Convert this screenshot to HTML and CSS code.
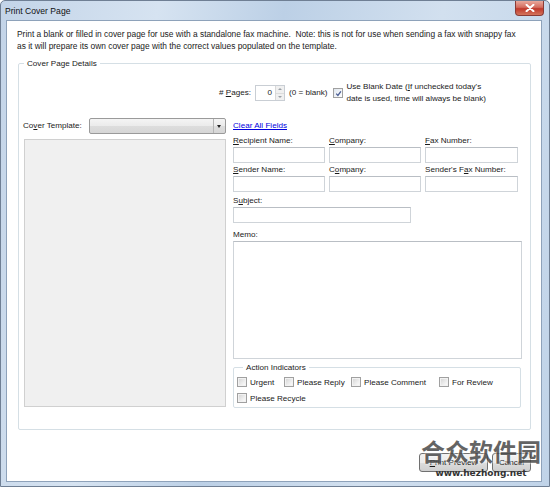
FILE: index.html
```
<!DOCTYPE html>
<html>
<head>
<meta charset="utf-8">
<link rel="stylesheet" href="styles.css">
</head>
<body>
<div class="window">
  <div class="titlebar">
    <span class="title">Print Cover Page</span>
    <span class="close"><svg width="10" height="8" viewBox="0 0 10 8"><path d="M1.5 0.8 L8.5 7.2 M8.5 0.8 L1.5 7.2" stroke="#fff" stroke-width="2" stroke-linecap="round"/></svg></span>
  </div>
  <div class="client">
    <p class="intro">Print a blank or filled in cover page for use with a standalone fax machine.&nbsp; Note: this is not for use when sending a fax with snappy fax<br>as it will prepare its own cover page with the correct values populated on the template.</p>
    <fieldset class="details">
      <legend>Cover Page Details</legend>
      <div class="pages-row">
        <span class="lbl"># <u>P</u>ages:</span>
        <span class="spinner"><span class="spin-val">0</span><span class="spin-btns"><span class="spin-up"></span><span class="spin-down"></span></span></span>
        <span class="lbl blank-lbl">(0 = blank)</span>
        <span class="cb checked"><svg width="7" height="7" viewBox="0 0 7 7"><path d="M1.2 3.6 L2.9 5.4 L5.9 1.3" fill="none" stroke="#4a5d94" stroke-width="1.3"/></svg></span>
        <span class="date-text">Use Blank Date (<u>I</u>f unchecked today's<br>date is used, time will always be blank)</span>
      </div>
      <div class="main">
        <div class="left">
          <div class="template-row">
            <span class="lbl">Co<u>v</u>er Template:</span>
            <span class="combo"><span class="combo-arrow"></span></span>
          </div>
          <div class="preview"></div>
        </div>
        <div class="right">
          <a class="clear" href="#">Clear All Fields</a>
          <div class="fields">
            <span class="flabel"><u>R</u>ecipient Name:</span>
            <span class="flabel"><u>C</u>ompany:</span>
            <span class="flabel"><u>F</u>ax Number:</span>
            <span class="input"></span>
            <span class="input"></span>
            <span class="input"></span>
            <span class="flabel"><u>S</u>ender Name:</span>
            <span class="flabel">C<u>o</u>mpany:</span>
            <span class="flabel">Sender's F<u>a</u>x Number:</span>
            <span class="input"></span>
            <span class="input"></span>
            <span class="input"></span>
          </div>
          <span class="flabel subj-label">S<u>u</u>bject:</span>
          <span class="input subject"></span>
          <span class="flabel memo-label">Memo:</span>
          <span class="memo"></span>
          <fieldset class="actions">
            <legend>Action Indicators</legend>
            <div class="act-row">
              <span class="act w-urgent"><span class="cb"></span>Urgent</span>
              <span class="act w-reply"><span class="cb"></span>Please Reply</span>
              <span class="act w-comment"><span class="cb"></span>Please Comment</span>
              <span class="act"><span class="cb"></span>For Review</span>
            </div>
            <div class="act-row">
              <span class="act"><span class="cb"></span>Please Recycle</span>
            </div>
          </fieldset>
        </div>
      </div>
    </fieldset>
    <div class="buttons">
      <span class="btn btn-preview"><u>P</u>rint Preview</span>
      <span class="btn btn-cancel">Cancel</span>
    </div>
    <div class="watermark">
      <span class="wm-cn">合众软件园</span>
      <span class="wm-url">www.hezhong.net</span>
    </div>
  </div>
</div>
</body>
</html>
```
FILE: styles.css
```
html, body {
  margin: 0;
  padding: 0;
  background: #fff;
}
body {
  font-family: "Liberation Sans", Arial, sans-serif;
  font-size: 8.1px;
  color: #1a1a1a;
}
.window {
  width: 550px;
  height: 487px;
  box-sizing: border-box;
  border: 1px solid #6f7f94;
  border-radius: 5px 5px 0 0;
  background: linear-gradient(100deg, #c3d4e8 0%, #d6e3f1 25%, #bcd0e6 45%, #d2e0ef 70%, #c0d3e8 100%);
  display: flex;
  flex-direction: column;
  overflow: hidden;
}
.titlebar {
  height: 19px;
  flex: none;
  display: flex;
  align-items: flex-start;
  padding-left: 4px;
}
.title {
  font-size: 8.6px;
  line-height: 20px;
  color: #111;
}
.close {
  margin-left: auto;
  margin-right: 5px;
  width: 29px;
  height: 15px;
  box-sizing: border-box;
  border: 1px solid #8a3b35;
  border-top: none;
  border-radius: 0 0 4px 4px;
  background: linear-gradient(#e9a99c 0%, #d46d5f 45%, #c0392b 55%, #d3745c 100%);
  display: flex;
  align-items: center;
  justify-content: center;
}
.client {
  flex: 1;
  margin: 0 7px 4px 5px;
  background: #fff;
  border: 1px solid #8ea2ba;
  position: relative;
}
.intro {
  margin: 8px 0 0 10px;
  line-height: 11.5px;
  font-size: 8.4px;
}
.details {
  margin: 6px 0 0 11px;
  padding: 0 0 21px 0;
  width: 513px;
  box-sizing: border-box;
  border: 1px solid #d5dfe5;
  border-radius: 2px;
}
.details legend {
  margin-left: 5px;
  padding: 0 3px;
  line-height: 11px;
}
.lbl {
  line-height: 12px;
}
.pages-row {
  margin: 12px 0 0 200px;
  display: flex;
  align-items: center;
}
.spinner {
  margin-left: 4px;
  width: 30px;
  height: 16px;
  box-sizing: border-box;
  border: 1px solid #c9ced4;
  display: flex;
  align-items: stretch;
}
.spin-val {
  flex: 1;
  text-align: right;
  padding-right: 3px;
  line-height: 14px;
}
.spin-btns {
  width: 8px;
  display: flex;
  flex-direction: column;
  border-left: 1px solid #d8d8d8;
  background: #f0f0f0;
}
.spin-up, .spin-down {
  flex: 1;
  position: relative;
}
.spin-up::after, .spin-down::after {
  content: "";
  position: absolute;
  left: 2px;
  border-left: 2px solid transparent;
  border-right: 2px solid transparent;
}
.spin-up::after {
  top: 2px;
  border-bottom: 2px solid #9aa0a6;
}
.spin-down::after {
  top: 2px;
  border-top: 2px solid #9aa0a6;
}
.spin-up {
  border-bottom: 1px solid #dcdcdc;
}
.blank-lbl {
  margin-left: 4px;
}
.cb {
  flex: none;
  display: inline-flex;
  align-items: center;
  justify-content: center;
  width: 8px;
  height: 8px;
  border: 1px solid #a0a0a0;
  background: linear-gradient(135deg, #d2d2d2 0%, #eeeeee 60%, #ffffff 100%);
  box-shadow: inset 0 0 0 1px #f2f2f2;
}
.pages-row .cb {
  margin-left: 6px;
  box-shadow: none;
  background: linear-gradient(135deg, #dfe6ee, #ffffff);
}
.date-text {
  margin-left: 3px;
  line-height: 12px;
}
.main {
  margin-top: 13px;
  display: flex;
  gap: 7px;
  padding-left: 4px;
}
.left {
  width: 203px;
  display: flex;
  flex-direction: column;
}
.template-row {
  display: flex;
  align-items: center;
  justify-content: space-between;
}
.combo {
  width: 137px;
  height: 16px;
  box-sizing: border-box;
  border: 1px solid #9a9a9a;
  border-radius: 2px;
  background: linear-gradient(#f4f4f4 0%, #ebebeb 50%, #dddddd 51%, #d6d6d6 100%);
  position: relative;
}
.combo-arrow {
  position: absolute;
  right: 0;
  top: 0;
  bottom: 0;
  width: 11px;
  border-left: 1px solid #b5b5b5;
}
.combo-arrow::after {
  content: "";
  position: absolute;
  left: 3px;
  top: 6px;
  border-left: 2.5px solid transparent;
  border-right: 2.5px solid transparent;
  border-top: 3px solid #222;
}
.preview {
  margin: 5px 0 0 1px;
  height: 268px;
  box-sizing: border-box;
  background: #f0f0f0;
  border: 1px solid #d0d0d0;
}
.right {
  width: 289px;
  display: flex;
  flex-direction: column;
  align-items: flex-start;
}
.clear {
  color: #0000e0;
  text-decoration: underline;
  line-height: 13px;
  margin-top: 1px;
}
.fields {
  margin-top: 3px;
  display: grid;
  grid-template-columns: 92px 92px 93px;
  column-gap: 4px;
}
.flabel {
  line-height: 12px;
}
.input {
  height: 16px;
  box-sizing: border-box;
  border: 1px solid #cfd4d9;
  border-top-color: #b9bec4;
  background: #fff;
  margin-bottom: 1px;
}
.subj-label {
  margin-top: 2px;
}
.subject {
  width: 178px;
}
.memo-label {
  margin-top: 5px;
}
.memo {
  margin-top: 0;
  width: 289px;
  height: 118px;
  box-sizing: border-box;
  border: 1px solid #cfd4d9;
  border-top-color: #b9bec4;
}
.actions {
  margin: 3px 0 0 0;
  padding: 1px 0 1px 3px;
  width: 288px;
  box-sizing: border-box;
  border: 1px solid #d5dfe5;
  border-radius: 2px;
}
.actions legend {
  margin-left: 6px;
  padding: 0 3px;
  line-height: 11px;
}
.act-row {
  display: flex;
  height: 16px;
  align-items: center;
}
.act {
  display: flex;
  align-items: center;
  gap: 3px;
}
.w-urgent { width: 47px; }
.w-reply { width: 67px; }
.w-comment { width: 88px; }
.buttons {
  margin: 23px 10px 0 0;
  display: flex;
  justify-content: flex-end;
  gap: 4px;
}
.btn {
  height: 19px;
  box-sizing: border-box;
  border: 1px solid #707070;
  border-radius: 3px;
  background: linear-gradient(#f2f2f2 0%, #ebebeb 50%, #dddddd 51%, #cfcfcf 100%);
  display: flex;
  align-items: center;
  justify-content: center;
}
.btn-preview { width: 69px; }
.btn-cancel { width: 39px; }
.watermark {
  position: absolute;
  left: 412px;
  top: 416px;
  width: 124px;
  display: flex;
  flex-direction: column;
  align-items: center;
}
.wm-cn {
  font-family: "Noto Sans CJK SC", sans-serif;
  font-size: 24px;
  font-weight: 700;
  line-height: 28px;
  color: #4a4a4a;
  opacity: 0.85;
  text-shadow: 0 0 2px #fff, 0 0 2px #fff;
}
.wm-url {
  font-family: "DejaVu Sans", sans-serif;
  font-size: 9px;
  font-weight: 700;
  color: #333;
  line-height: 12px;
  margin-top: 2px;
}
```
